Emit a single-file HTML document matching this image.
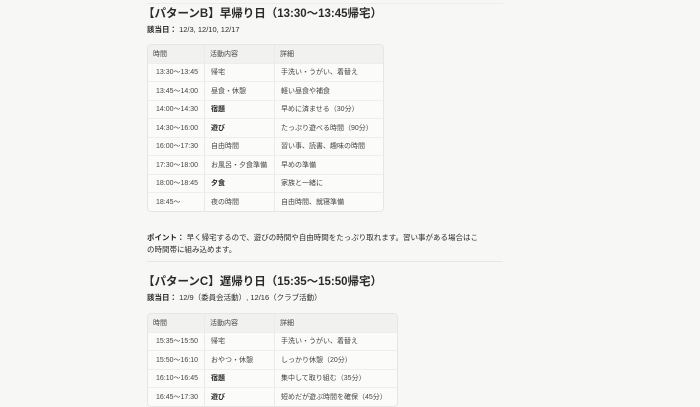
<!DOCTYPE html><html><head><meta charset="utf-8"><style>
body{margin:0;width:700px;height:400px;overflow:hidden;background:#f7f7f5;font-family:"Liberation Sans","Noto Sans CJK JP",sans-serif;color:#2b2b2b;position:relative}
.a{position:absolute;white-space:nowrap}
h2{position:absolute;margin:0;font-size:11.5px;font-weight:bold;left:143px;white-space:nowrap}
.d{font-size:7.5px;left:147px}
table{position:absolute;left:147px;border-collapse:separate;border-spacing:0;border:1px solid #e6e6e4;border-radius:4px;font-size:7px;background:#fbfbfa;overflow:hidden}
td{height:17.5px;padding:0 0 0 6px;border-right:1px solid #eaeae8;border-top:1px solid #eeeeec;color:#444}
td:last-child{border-right:none}
tr:first-child td{border-top:none;background:#f1f1ef;padding-left:5px}
tr td:first-child{padding-left:8px}
tr:first-child td:first-child{padding-left:5px}
b{color:#222}
</style></head><body>
<div class="a" style="left:147px;right:197px;top:3px;border-top:1px solid #ececea"></div>
<h2 style="top:5px">【パターンB】早帰り日（13:30〜13:45帰宅）</h2>
<div class="a d" style="top:24px"><b>該当日：</b> 12/3, 12/10, 12/17</div>
<table style="top:44px;width:237px">
<tr><td style="width:51px">時間</td><td style="width:64px">活動内容</td><td>詳細</td></tr>
<tr><td>13:30〜13:45</td><td>帰宅</td><td>手洗い・うがい、着替え</td></tr>
<tr><td>13:45〜14:00</td><td>昼食・休憩</td><td>軽い昼食や補食</td></tr>
<tr><td>14:00〜14:30</td><td><b>宿題</b></td><td>早めに済ませる（30分）</td></tr>
<tr><td>14:30〜16:00</td><td><b>遊び</b></td><td>たっぷり遊べる時間（90分）</td></tr>
<tr><td>16:00〜17:30</td><td>自由時間</td><td>習い事、読書、趣味の時間</td></tr>
<tr><td>17:30〜18:00</td><td>お風呂・夕食準備</td><td>早めの準備</td></tr>
<tr><td>18:00〜18:45</td><td><b>夕食</b></td><td>家族と一緒に</td></tr>
<tr><td>18:45〜</td><td>夜の時間</td><td>自由時間、就寝準備</td></tr>
</table>
<div class="a d" style="top:232px;line-height:12px"><b>ポイント：</b> 早く帰宅するので、遊びの時間や自由時間をたっぷり取れます。習い事がある場合はこ<br>の時間帯に組み込めます。</div>
<div class="a" style="left:147px;width:356px;top:261px;border-top:1px solid #e6e6e4"></div>
<h2 style="top:273px">【パターンC】遅帰り日（15:35〜15:50帰宅）</h2>
<div class="a d" style="top:292px"><b>該当日：</b> 12/9（委員会活動）, 12/16（クラブ活動）</div>
<table style="top:313px;width:251px">
<tr><td style="width:51px">時間</td><td style="width:64px">活動内容</td><td>詳細</td></tr>
<tr><td>15:35〜15:50</td><td>帰宅</td><td>手洗い・うがい、着替え</td></tr>
<tr><td>15:50〜16:10</td><td>おやつ・休憩</td><td>しっかり休憩（20分）</td></tr>
<tr><td>16:10〜16:45</td><td><b>宿題</b></td><td>集中して取り組む（35分）</td></tr>
<tr><td>16:45〜17:30</td><td><b>遊び</b></td><td>短めだが遊ぶ時間を確保（45分）</td></tr>
</table>
</body></html>
